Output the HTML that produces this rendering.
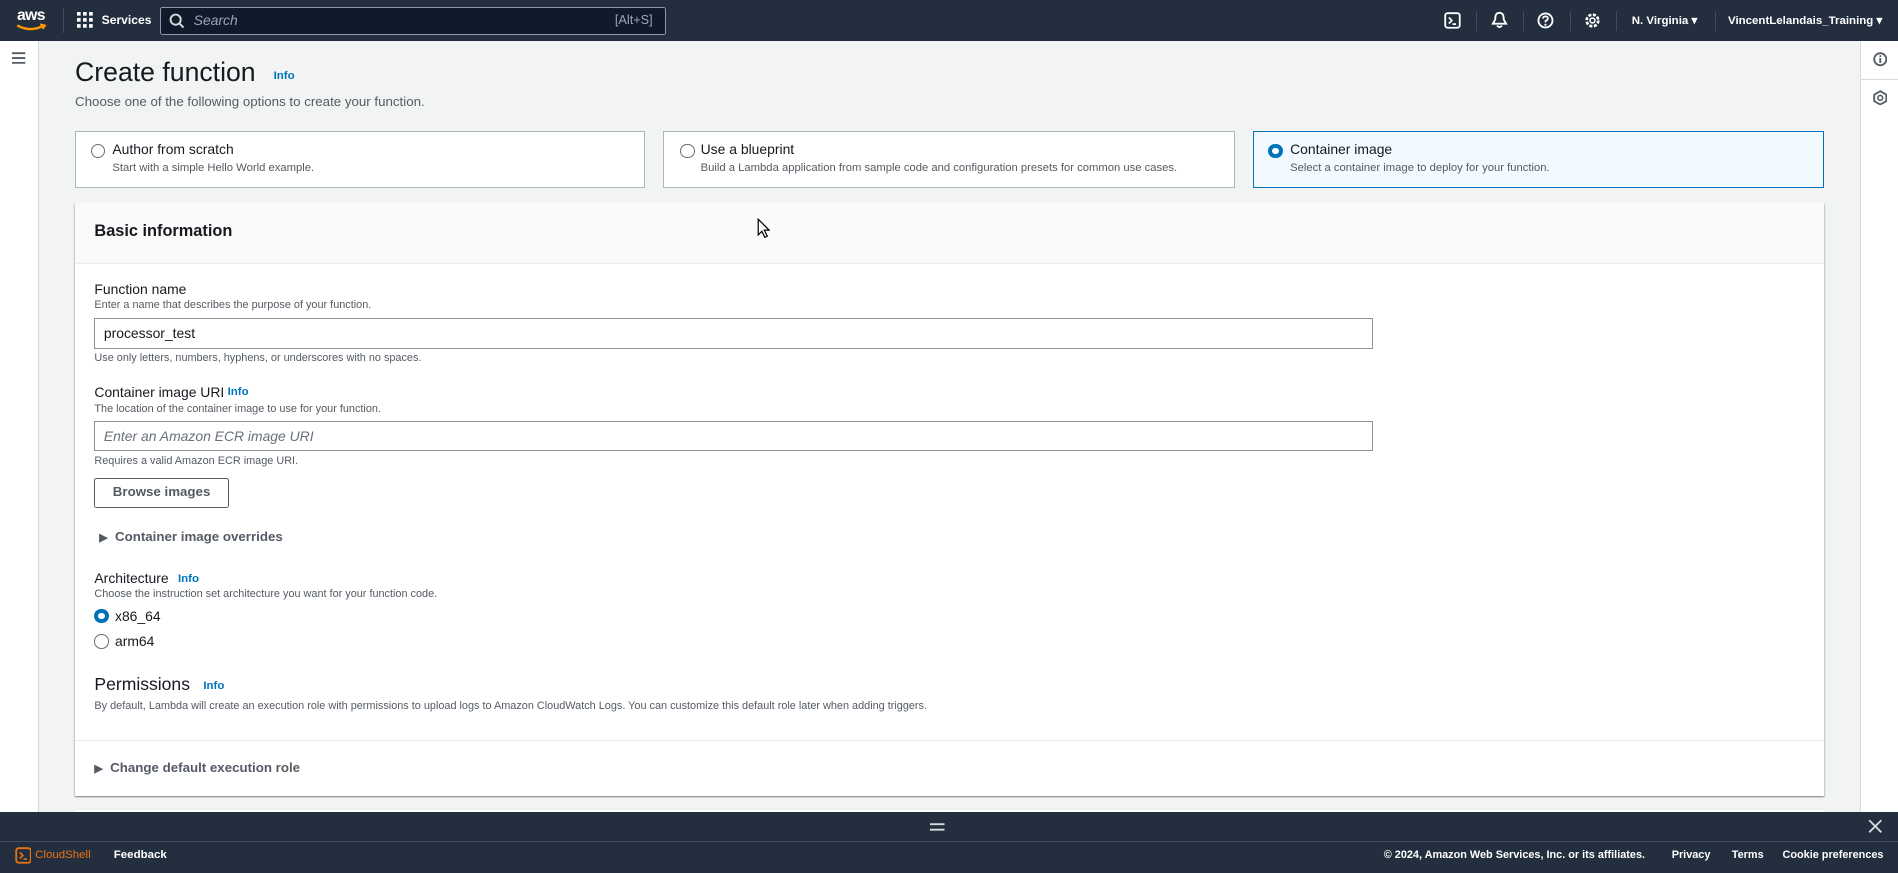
<!DOCTYPE html>
<html><head><meta charset="utf-8"><style>
html{zoom:1.21046}
*{box-sizing:border-box;margin:0;padding:0}
body{width:1568px;height:721px;overflow:hidden;background:#f2f3f3;font-family:"Liberation Sans",sans-serif;color:#16191f;position:relative}
.a{position:absolute;white-space:nowrap}
.nav{left:0;top:0;width:1568px;height:34px;background:#232f3e}
.w{color:#fff;font-size:10px;font-weight:bold}
.info{color:#0073bb;font-size:9.5px;font-weight:bold}
.card{background:#fff;border:1px solid #aab7b8;height:47px;top:108px}
.rad{width:12px;height:12px;border:1px solid #687078;border-radius:50%;background:#fff}
.rad.on{border:4px solid #0073bb}
.ct{font-size:11.5px;left:30px;top:8px}
.cd{font-size:9.3px;color:#545b64;left:30px;top:25px}
.lbl{font-size:11.5px}
.desc{font-size:9px;color:#545b64}
.inp{border:1px solid #879596;height:25px;background:#fff;font-size:11.5px;padding:5px 7px}
</style></head><body>
<div class="a nav"></div>
<div class="a" style="left:14px;top:6px;color:#fff;font-size:13px;font-weight:bold;letter-spacing:-.5px">aws</div>
<svg class="a" style="left:13px;top:19px" width="26" height="8"><path d="M1 2 Q12 8 23 2" stroke="#ff9900" stroke-width="2" fill="none"/><path d="M20 1 L24 2 L22 5" stroke="#ff9900" stroke-width="1.5" fill="none"/></svg>
<div class="a" style="left:52px;top:7px;width:1px;height:20px;background:#414d5c"></div>
<svg class="a" style="left:64px;top:10px" width="14" height="14" fill="#fff"><rect x="0" y="0" width="3" height="3"/><rect x="5" y="0" width="3" height="3"/><rect x="10" y="0" width="3" height="3"/><rect x="0" y="5" width="3" height="3"/><rect x="5" y="5" width="3" height="3"/><rect x="10" y="5" width="3" height="3"/><rect x="0" y="10" width="3" height="3"/><rect x="5" y="10" width="3" height="3"/><rect x="10" y="10" width="3" height="3"/></svg>
<div class="a w" style="left:84px;top:11px;font-size:10px">Services</div>
<div class="a" style="left:132px;top:6px;width:418px;height:23px;background:#0f1b2a;border:1px solid #8d99a8;border-radius:2px"></div>
<svg class="a" style="left:140px;top:11px" width="13" height="13"><circle cx="5.5" cy="5.5" r="4.2" stroke="#d5dbdb" stroke-width="1.6" fill="none"/><path d="M8.5 8.5 L12 12" stroke="#d5dbdb" stroke-width="1.6"/></svg>
<div class="a" style="left:160px;top:10px;color:#9ba7b6;font-size:11.5px;font-style:italic">Search</div>
<div class="a" style="left:508px;top:11px;color:#9ba7b6;font-size:10.5px">[Alt+S]</div>
<svg class="a" style="left:1193px;top:10px" width="14" height="14"><rect x="1" y="1" width="12" height="12" rx="2" stroke="#fff" stroke-width="1.5" fill="none"/><path d="M4 4.5 L6.5 7 L4 9.5 M7 10 H10" stroke="#fff" stroke-width="1.4" fill="none"/></svg>
<div class="a" style="left:1219px;top:9px;width:1px;height:17px;background:#414d5c"></div>
<svg class="a" style="left:1232px;top:9px" width="14" height="15"><path d="M7 1.5 C3.5 1.5 3.5 5 3.5 7 L1.5 10.5 H12.5 L10.5 7 C10.5 5 10.5 1.5 7 1.5Z M5 12 Q7 14.5 9 12" stroke="#fff" stroke-width="1.5" fill="none"/></svg>
<div class="a" style="left:1258px;top:9px;width:1px;height:17px;background:#414d5c"></div>
<svg class="a" style="left:1270px;top:10px" width="14" height="14"><circle cx="7" cy="7" r="5.8" stroke="#fff" stroke-width="1.5" fill="none"/><path d="M5 5.5 Q5 3.6 7 3.6 Q9 3.6 9 5.4 Q9 6.6 7 7.4 V8.6" stroke="#fff" stroke-width="1.4" fill="none"/><circle cx="7" cy="10.5" r=".9" fill="#fff"/></svg>
<div class="a" style="left:1297px;top:9px;width:1px;height:17px;background:#414d5c"></div>
<svg class="a" style="left:1309px;top:10px" width="14" height="14"><circle cx="7" cy="7" r="4.8" stroke="#fff" stroke-width="2.2" stroke-dasharray="2.5 1.3" fill="none"/><circle cx="7" cy="7" r="2" stroke="#fff" stroke-width="1.3" fill="none"/></svg>
<div class="a" style="left:1335px;top:9px;width:1px;height:17px;background:#414d5c"></div>
<div class="a w" style="left:1348px;top:11px;font-size:9.5px">N. Virginia ▾</div>
<div class="a" style="left:1417px;top:9px;width:1px;height:17px;background:#414d5c"></div>
<div class="a w" style="right:13px;top:11px;font-size:9.5px">VincentLelandais_Training ▾</div>

<div class="a" style="left:0;top:34px;width:32px;height:637px;background:#fff;border-right:1px solid #d5dbdb"></div>
<svg class="a" style="left:10px;top:43px" width="12" height="10"><path d="M0 1H11M0 5H11M0 9H11" stroke="#545b64" stroke-width="1.5"/></svg>
<div class="a" style="left:1537px;top:34px;width:31px;height:637px;background:#fff;border-left:1px solid #d5dbdb"></div>
<div class="a" style="left:1537px;top:65px;width:31px;height:1px;background:#d5dbdb"></div>
<svg class="a" style="left:1547px;top:43px" width="12" height="12"><circle cx="6" cy="6" r="5" stroke="#545b64" stroke-width="1.5" fill="none"/><path d="M6 5V9" stroke="#545b64" stroke-width="1.6"/><circle cx="6" cy="3.4" r=".8" fill="#545b64"/></svg>
<svg class="a" style="left:1547px;top:74px" width="12" height="13"><path d="M6 1L11 3.8V9.2L6 12L1 9.2V3.8Z" stroke="#545b64" stroke-width="1.5" fill="none"/><circle cx="6" cy="6.5" r="2" stroke="#545b64" stroke-width="1.3" fill="none"/></svg>

<div class="a" style="left:62px;top:47px;font-size:22px">Create function</div>
<div class="a info" style="left:226px;top:58px">Info</div>
<div class="a" style="left:62px;top:78px;font-size:11px;color:#545b64">Choose one of the following options to create your function.</div>

<div class="a card" style="left:62px;width:471px"><div class="a rad" style="left:12px;top:10px"></div><div class="a ct">Author from scratch</div><div class="a cd">Start with a simple Hello World example.</div></div>
<div class="a card" style="left:548px;width:472px"><div class="a rad" style="left:13px;top:10px"></div><div class="a ct">Use a blueprint</div><div class="a cd">Build a Lambda application from sample code and configuration presets for common use cases.</div></div>
<div class="a card" style="left:1035px;width:472px;background:#f1faff;border-color:#0073bb"><div class="a rad on" style="left:12px;top:10px"></div><div class="a ct">Container image</div><div class="a cd">Select a container image to deploy for your function.</div></div>

<div class="a" style="left:62px;top:168px;width:1445px;height:490px;background:#fff;box-shadow:0 1px 1px rgba(0,28,36,.3),1px 1px 1px rgba(0,28,36,.15),-1px 1px 1px rgba(0,28,36,.15)"></div>
<div class="a" style="left:62px;top:168px;width:1445px;height:50px;background:#fafafa;border-bottom:1px solid #eaeded"></div>
<div class="a" style="left:78px;top:183px;font-size:13.5px;font-weight:bold">Basic information</div>
<svg class="a" style="left:625px;top:180px" width="11" height="17"><path d="M1 1V14L4 11L6.5 16L8.5 15L6 10H10Z" fill="#fff" stroke="#000" stroke-width="1"/></svg>

<div class="a lbl" style="left:78px;top:232px">Function name</div>
<div class="a desc" style="left:78px;top:247px">Enter a name that describes the purpose of your function.</div>
<div class="a inp" style="left:78px;top:263px;width:1056px">processor_test</div>
<div class="a desc" style="left:78px;top:291px">Use only letters, numbers, hyphens, or underscores with no spaces.</div>
<div class="a lbl" style="left:78px;top:317px">Container image URI</div>
<div class="a info" style="left:188px;top:319px">Info</div>
<div class="a desc" style="left:78px;top:333px">The location of the container image to use for your function.</div>
<div class="a inp" style="left:78px;top:348px;width:1056px;color:#687078;font-style:italic">Enter an Amazon ECR image URI</div>
<div class="a desc" style="left:78px;top:376px">Requires a valid Amazon ECR image URI.</div>
<div class="a" style="left:78px;top:395px;width:111px;height:25px;border:1px solid #545b64;border-radius:2px;font-size:11px;font-weight:bold;color:#545b64;text-align:center;line-height:22px">Browse images</div>
<div class="a" style="left:82px;top:437px;font-size:11px;font-weight:bold;color:#545b64"><span style="font-size:9px">▶</span>&nbsp; Container image overrides</div>

<div class="a lbl" style="left:78px;top:471px">Architecture</div>
<div class="a info" style="left:147px;top:473px">Info</div>
<div class="a desc" style="left:78px;top:486px">Choose the instruction set architecture you want for your function code.</div>
<div class="a rad on" style="left:78px;top:503px"></div><div class="a lbl" style="left:95px;top:502px">x86_64</div>
<div class="a rad" style="left:78px;top:524px"></div><div class="a lbl" style="left:95px;top:523px">arm64</div>
<div class="a" style="left:78px;top:557px;font-size:14.5px">Permissions</div>
<div class="a info" style="left:168px;top:562px">Info</div>
<div class="a desc" style="left:78px;top:578px">By default, Lambda will create an execution role with permissions to upload logs to Amazon CloudWatch Logs. You can customize this default role later when adding triggers.</div>
<div class="a" style="left:62px;top:611px;width:1445px;height:1px;background:#eaeded"></div>
<div class="a" style="left:78px;top:628px;font-size:11px;font-weight:bold;color:#545b64"><span style="font-size:9px">▶</span>&nbsp; Change default execution role</div>
<div class="a" style="left:62px;top:668px;width:1445px;height:10px;background:#fff;border-top:1px solid #eaeded"></div>

<div class="a" style="left:0;top:671px;width:1568px;height:50px;background:#232f3e"></div>
<div class="a" style="left:0;top:695px;width:1568px;height:1px;background:#414d5c"></div>
<svg class="a" style="left:768px;top:680px" width="13" height="7"><path d="M0 1H12M0 5.5H12" stroke="#d5dbdb" stroke-width="1.5"/></svg>
<svg class="a" style="left:1543px;top:677px" width="12" height="12"><path d="M1 1L11 11M11 1L1 11" stroke="#d5dbdb" stroke-width="1.5"/></svg>
<svg class="a" style="left:12px;top:700px" width="14" height="14"><rect x="1" y="1" width="12" height="12" rx="2" stroke="#ec7211" stroke-width="1.5" fill="none"/><path d="M4 4.5L6.5 7L4 9.5M7 10H10" stroke="#ec7211" stroke-width="1.3" fill="none"/></svg>
<div class="a" style="left:29px;top:701px;font-size:9.5px;color:#ec7211">CloudShell</div>
<div class="a w" style="left:94px;top:701px;font-size:9.5px">Feedback</div>
<div class="a w" style="right:209px;top:701px;font-size:9px">© 2024, Amazon Web Services, Inc. or its affiliates.</div>
<div class="a w" style="right:155px;top:701px;font-size:9px">Privacy</div>
<div class="a w" style="right:111px;top:701px;font-size:9px">Terms</div>
<div class="a w" style="right:12px;top:701px;font-size:9px">Cookie preferences</div>
</body></html>
